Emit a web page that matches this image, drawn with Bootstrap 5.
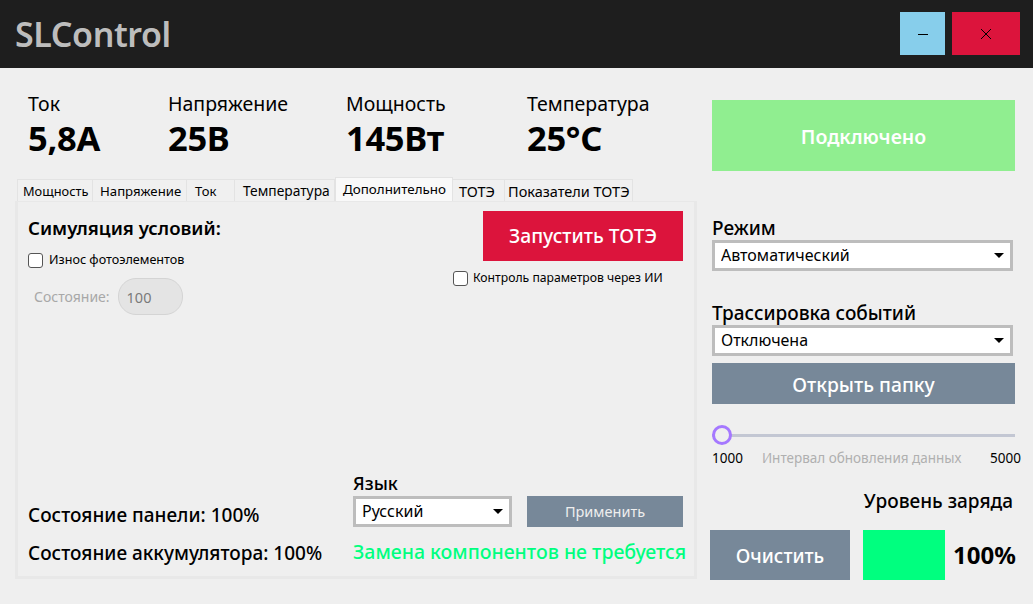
<!DOCTYPE html>
<html lang="ru">
<head>
  <meta charset="UTF-8">
  <meta name="viewport" content="width=device-width, initial-scale=1">
  <title>SLControl</title>
  <link rel="stylesheet" href="https://cdn.jsdelivr.net/npm/bootstrap@5.3.3/dist/css/bootstrap.min.css">
  <style>
    html, body { height: 100%; }
    body { background-color: #efefef; color: #000; font-family: "Noto Sans", "Open Sans", sans-serif; overflow: hidden; }
    .app-header { height: 68px; background-color: #1e1e1e; padding: 12px 13px 13px 15px; }
    .app-title { font-size: 34px; font-weight: 600; color: #bdbdbd; line-height: 44px; letter-spacing: -0.4px; }
    .win-btn { height: 43px; border: 0; border-radius: 0; padding: 0; display: flex; align-items: center; justify-content: center; }
    .win-min { width: 45px; background-color: #87ceeb; margin-right: 7px; }
    .win-close { width: 68px; background-color: #dc143c; }
    .left-col { width: 682px; margin-left: 15px; }
    .right-col { width: 305px; margin-left: 15px; }
    .stats { padding: 23px 0 0 13px; height: 109px; }
    .stat-1 { width: 140px; } .stat-2 { width: 178px; } .stat-3 { width: 181px; }
    .stat-label { font-size: 19.5px; line-height: 25px; }
    .stat-value { font-size: 34.5px; font-weight: 700; line-height: 43px; letter-spacing: -0.3px; }
    .tabs-bar { padding-left: 2px; border: 0; height: 24px; align-items: flex-end; flex-wrap: nowrap; }
    .tabs-bar .nav-link { font-size: 13px; line-height: 20px; height: 22px; padding: 1px 0 1px 6px; color: #000; background: #f0f0f0; border: 1px solid #e3e3e3; border-bottom: 0; border-left-width: 0; border-radius: 0; margin: 0; white-space: nowrap; text-align: left; }
    .tabs-bar .nav-item:first-child .nav-link { border-left-width: 1px; }
    .tabs-bar .nav-link.active { background: #f9f9f9; height: 24px; padding-top: 0; padding-left: 7px; color: #000; border-left-width: 1px; border-color: #e3e3e3; font-size: 13.4px; }
    .tw-power { width: 76px; padding-left: 5px !important; font-size: 12.8px !important; }
    .tw-volt { width: 94px; padding-left: 7px !important; font-size: 13.2px !important; }
    .tw-cur { width: 48px; padding-left: 8px !important; }
    .tw-temp { width: 100px; padding-left: 8px !important; font-size: 13.8px !important; }
    .tw-add { width: 118px; }
    .tw-fc { width: 52px; font-size: 14.5px !important; }
    .tw-fcstat { width: 128px; padding-left: 3px !important; font-size: 14.5px !important; }
    .tab-panel { height: 378px; border: 3px solid #e8e8e8; border-top-width: 1px; padding: 9px 11px 12px 10px; }
    .sim-title { font-size: 18.6px; font-weight: 600; line-height: 24px; margin-top: 5px; }
    .check-row { font-size: 12.2px; line-height: 16px; }
    .check-row .form-check-input { width: 15px; height: 15px; margin: 0 5px 0 0; background-color: #fff; border: 1px solid #555; border-radius: 3px; float: none; flex: none; }
    .sim-check { margin-top: 12px; font-size: 12.6px; }
    .sim-check .form-check-input { margin-right: 6px; }
    .state-row { color: #a8a8a8; font-size: 14px; margin: 10px 0 0 6px; }
    .state-input { width: 65px; height: 37px; margin-left: 8px; padding: 0 6px 0 8px; font-size: 14.5px; color: #7a7a7a; background: #e4e4e4 !important; border: 1px solid #d4d4d4; border-radius: 18px; }
    .run-btn { width: 200px; height: 50px; border: 0; border-radius: 0; color: #fff; background-color: #dc143c; font-size: 19.3px; font-weight: 500; padding: 0; }
    .ai-check { margin-top: 9px; width: 230px; }
    .top-right { margin-left: auto; }
    .state-list { margin-bottom: -1px; }
    .panel-state { font-size: 19px; font-weight: 500; line-height: 24px; white-space: nowrap; }
    .panel-state + .panel-state { margin-top: 14px; }
    .lang-block { width: 330px; }
    .lang-label { font-size: 18px; font-weight: 500; line-height: 22px; margin-bottom: 2px; }
    .combo { height: 31px; border: 3px solid #bdbdbd; border-radius: 0; padding: 0 6px 2px; font-size: 16px; line-height: 24px; color: #000; background-size: 10px 5px; background-position: right 6px center; background-image: url("data:image/svg+xml,%3csvg xmlns='http://www.w3.org/2000/svg' viewBox='0 0 10 5'%3e%3cpath d='M0 0h10L5 5z'/%3e%3c/svg%3e"); }
    .lang-combo { width: 159px; }
    .apply-btn { width: 156px; height: 31px; margin-left: 15px; padding: 0; border: 0; border-radius: 0; background-color: #778899; color: #eee; font-size: 14.5px; }
    .ok-text { color: #00ff7f; font-size: 19.5px; font-weight: 500; line-height: 24px; white-space: nowrap; margin-top: 13px; }
    .conn-btn { display: block; width: 303px; height: 71px; margin-top: 32px; padding: 2px 0 0; border: 0; border-radius: 0; background-color: #90ee90; color: #fff; font-size: 19.5px; font-weight: 600; }
    .side-label { font-size: 19px; font-weight: 500; line-height: 24px; white-space: nowrap; }
    .side-combo { width: 301px; }
    .mode-block { margin-top: 45px; }
    .trace-block { margin-top: 30px; }
    .folder-btn { display: block; width: 303px; height: 41px; margin-top: 7px; border: 0; border-radius: 0; padding: 3px 0 0; background-color: #778899; color: #fff; font-size: 19.3px; font-weight: 500; }
    .range-wrap { width: 303px; margin-top: 21px; height: 20px; }
    .range-wrap .form-range { display: block; height: 20px; padding: 0; }
    .form-range::-webkit-slider-runnable-track { height: 3px; background: #c3c7d3; border-radius: 0; }
    .form-range::-webkit-slider-thumb { -webkit-appearance: none; width: 20px; height: 20px; margin-top: -8.5px; background: #efefef; border: 3.5px solid #a578ff; border-radius: 50%; }
    .range-labels { width: 309px; font-size: 13.5px; line-height: 18px; margin-top: 4px; }
    .range-hint { color: #b0b0b0; margin-left: 19px; }
    .charge-title { width: 301px; text-align: right; font-size: 19px; font-weight: 500; line-height: 24px; margin-top: 22px; white-space: nowrap; }
    .charge-row { margin: 17px 0 0 -2px; }
    .clear-btn { width: 140px; height: 50px; border: 0; border-radius: 0; padding: 3px 0 0; background-color: #778899; color: #fff; font-size: 19px; font-weight: 500; }
    .charge-box { width: 82px; height: 50px; margin-left: 13px; background-color: #00ff7f; }
    .charge-val { margin-left: 8px; font-size: 24px; font-weight: 700; white-space: nowrap; }
  </style>
</head>
<body>

<header class="app-header d-flex align-items-start justify-content-between">
  <div class="app-title">SLControl</div>
  <div class="d-flex">
    <button class="win-btn win-min" type="button" aria-label="Свернуть">
      <svg width="10" height="10" viewBox="0 0 10 10"><path d="M0 5.5h10" stroke="#000" stroke-width="1"/></svg>
    </button>
    <button class="win-btn win-close" type="button" aria-label="Закрыть">
      <svg width="10" height="10" viewBox="0 0 10 10"><path d="M0 0l10 10M10 0L0 10" stroke="#000" stroke-width="1"/></svg>
    </button>
  </div>
</header>

<main class="d-flex">
  <div class="left-col">
    <div class="stats d-flex">
      <div class="stat-1"><div class="stat-label">Ток</div><div class="stat-value">5,8А</div></div>
      <div class="stat-2"><div class="stat-label">Напряжение</div><div class="stat-value">25В</div></div>
      <div class="stat-3"><div class="stat-label">Мощность</div><div class="stat-value">145Вт</div></div>
      <div><div class="stat-label">Температура</div><div class="stat-value">25°C</div></div>
    </div>

    <ul class="nav nav-tabs tabs-bar">
      <li class="nav-item"><button class="nav-link tw-power" type="button">Мощность</button></li>
      <li class="nav-item"><button class="nav-link tw-volt" type="button">Напряжение</button></li>
      <li class="nav-item"><button class="nav-link tw-cur" type="button">Ток</button></li>
      <li class="nav-item"><button class="nav-link tw-temp" type="button">Температура</button></li>
      <li class="nav-item"><button class="nav-link tw-add active" type="button">Дополнительно</button></li>
      <li class="nav-item"><button class="nav-link tw-fc" type="button">ТОТЭ</button></li>
      <li class="nav-item"><button class="nav-link tw-fcstat" type="button">Показатели ТОТЭ</button></li>
    </ul>

    <section class="tab-panel d-flex flex-column justify-content-between">
      <div class="d-flex">
        <div>
          <div class="sim-title">Симуляция условий:</div>
          <label class="check-row sim-check d-flex align-items-center">
            <input class="form-check-input" type="checkbox">Износ фотоэлементов
          </label>
          <div class="state-row d-flex align-items-center">
            <span>Состояние:</span>
            <input class="form-control state-input" type="text" value="100" disabled>
          </div>
        </div>
        <div class="top-right d-flex flex-column align-items-end">
          <button class="run-btn" type="button">Запустить ТОТЭ</button>
          <label class="check-row ai-check d-flex align-items-center">
            <input class="form-check-input" type="checkbox">Контроль параметров через ИИ
          </label>
        </div>
      </div>

      <div class="d-flex justify-content-between align-items-end">
        <div class="state-list">
          <div class="panel-state">Состояние панели: 100%</div>
          <div class="panel-state">Состояние аккумулятора: 100%</div>
        </div>
        <div class="lang-block">
          <div class="lang-label">Язык</div>
          <div class="d-flex">
            <select class="form-select combo lang-combo"><option>Русский</option></select>
            <button class="apply-btn" type="button">Применить</button>
          </div>
          <div class="ok-text">Замена компонентов не требуется</div>
        </div>
      </div>
    </section>
  </div>

  <aside class="right-col">
    <button class="conn-btn" type="button">Подключено</button>

    <div class="mode-block">
      <div class="side-label">Режим</div>
      <select class="form-select combo side-combo"><option>Автоматический</option></select>
    </div>

    <div class="trace-block">
      <div class="side-label">Трассировка событий</div>
      <select class="form-select combo side-combo"><option>Отключена</option></select>
      <button class="folder-btn" type="button">Открыть папку</button>
    </div>

    <div class="range-wrap">
      <input class="form-range" type="range" min="1000" max="5000" value="1000">
    </div>
    <div class="range-labels d-flex">
      <span>1000</span>
      <span class="range-hint">Интервал обновления данных</span>
      <span class="ms-auto">5000</span>
    </div>

    <div class="charge-title">Уровень заряда</div>
    <div class="charge-row d-flex align-items-center">
      <button class="clear-btn" type="button">Очистить</button>
      <div class="charge-box"></div>
      <div class="charge-val">100%</div>
    </div>
  </aside>
</main>

</body>
</html>
